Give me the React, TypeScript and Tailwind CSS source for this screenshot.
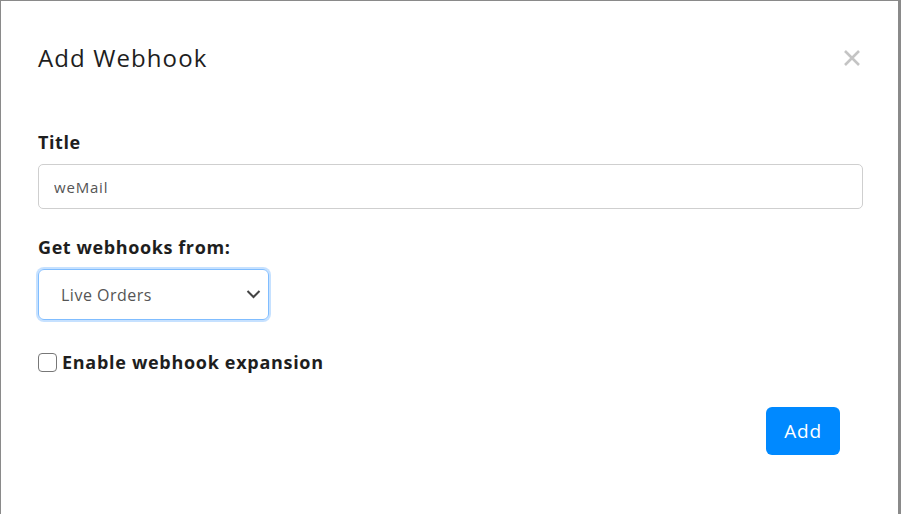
import React from 'react';

export default function App() {
  return (
    <div className="w-[901px] h-[514px] bg-[#8a8a8a] pl-px pt-px pr-[3px] overflow-hidden" style={{ fontFamily: '"Open Sans", Lato, sans-serif' }}>
      <div className="h-full bg-white pl-[37px] pr-[35px] text-[#1e1e1e]">
        {/* Header */}
        <div className="flex items-center justify-between h-[114px] pb-[1px]">
          <h2 className="text-[24px] leading-none tracking-[1.1px]">Add Webhook</h2>
          <button className="mr-[2px] text-[#c4c4c4]" aria-label="close">
            <svg width="18" height="18" viewBox="0 0 18 18">
              <path d="M2 2 L16 16 M16 2 L2 16" stroke="currentColor" strokeWidth="2.6" />
            </svg>
          </button>
        </div>

        {/* Title */}
        <label className="block text-[18px] font-bold leading-none tracking-[0.6px] mb-[13px] mt-[18px]">Title</label>
        <input
          defaultValue="weMail"
          className="w-full h-[45px] border border-[#cfcfcf] rounded-[5px] px-[15px] text-[15px] tracking-[0.8px] text-[#555]"
        />

        {/* Source */}
        <label className="block text-[18px] font-bold leading-none tracking-[0.6px] mt-[29px] mb-[13px]">Get webhooks from:</label>
        <div className="relative w-[231px] h-[51px] rounded-[6px] border border-[#80bdff] shadow-[0_0_0_2px_rgba(128,189,255,0.45)] flex items-center pl-[22px]">
          <span className="text-[16px] tracking-[0.5px] text-[#555]">Live Orders</span>
          <svg className="absolute right-[7px] top-[19px]" width="15" height="10" viewBox="0 0 15 10">
            <path d="M1.5 2 L7.5 8 L13.5 2" fill="none" stroke="#444" strokeWidth="2" />
          </svg>
        </div>

        {/* Checkbox */}
        <label className="flex items-center gap-[5px] mt-[29px]">
          <span className="w-[19px] h-[19px] rounded-[4px] border border-[#777] bg-white" />
          <span className="text-[18px] font-bold tracking-[0.7px]">Enable webhook expansion</span>
        </label>

        {/* Footer */}
        <div className="flex justify-end mt-[31px] pr-[23px]">
          <button className="w-[74px] h-[48px] rounded-[6px] bg-[#0089ff] text-white text-[19px] tracking-[0.8px]">Add</button>
        </div>
      </div>
    </div>
  );
}
